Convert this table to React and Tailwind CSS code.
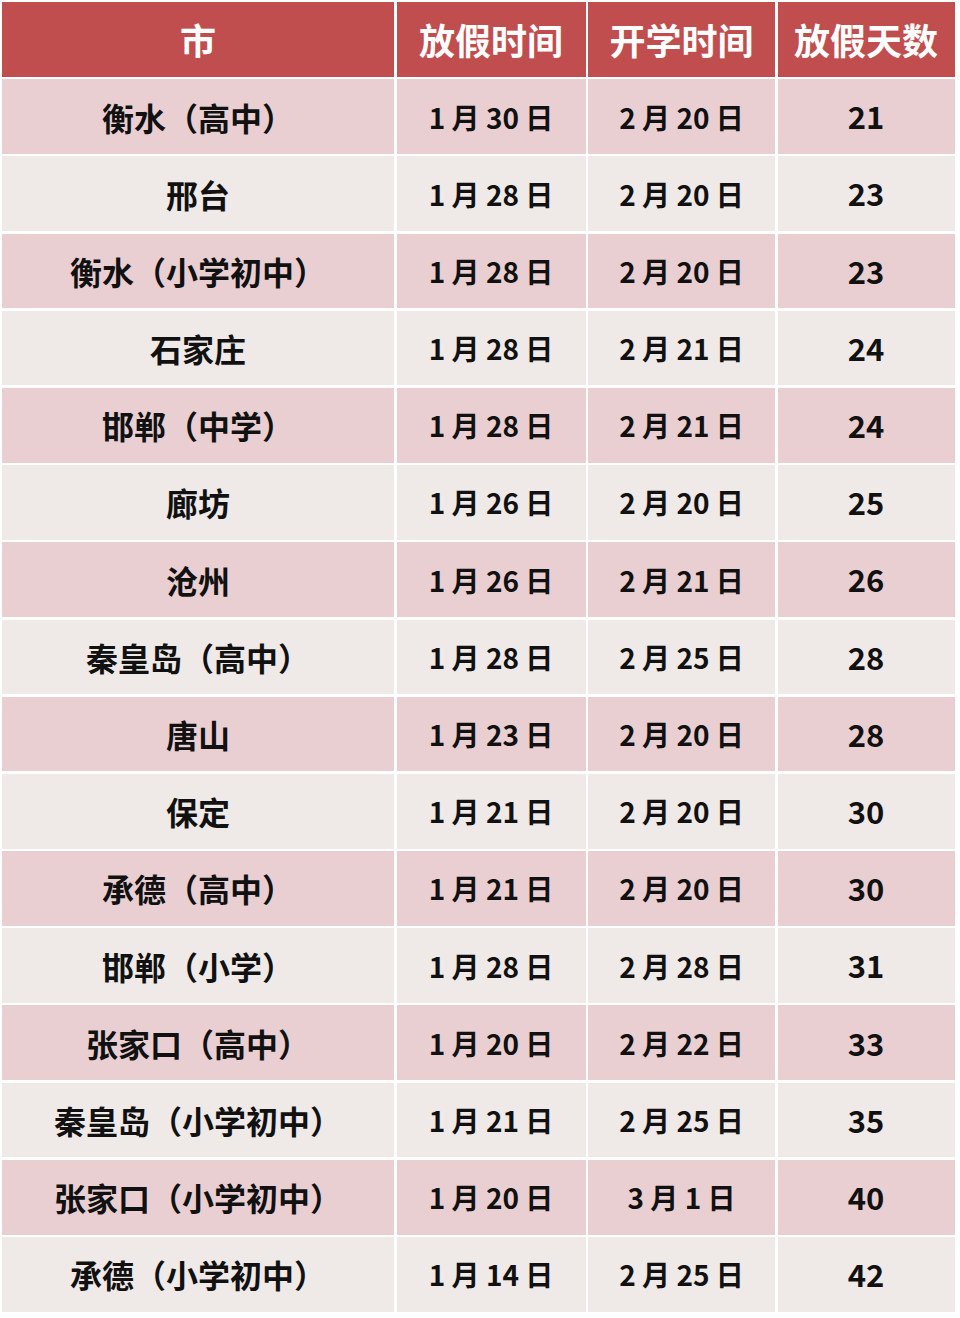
const rows = [
  ["衡水（高中）", "1 月 30 日", "2 月 20 日", "21"],
  ["邢台", "1 月 28 日", "2 月 20 日", "23"],
  ["衡水（小学初中）", "1 月 28 日", "2 月 20 日", "23"],
  ["石家庄", "1 月 28 日", "2 月 21 日", "24"],
  ["邯郸（中学）", "1 月 28 日", "2 月 21 日", "24"],
  ["廊坊", "1 月 26 日", "2 月 20 日", "25"],
  ["沧州", "1 月 26 日", "2 月 21 日", "26"],
  ["秦皇岛（高中）", "1 月 28 日", "2 月 25 日", "28"],
  ["唐山", "1 月 23 日", "2 月 20 日", "28"],
  ["保定", "1 月 21 日", "2 月 20 日", "30"],
  ["承德（高中）", "1 月 21 日", "2 月 20 日", "30"],
  ["邯郸（小学）", "1 月 28 日", "2 月 28 日", "31"],
  ["张家口（高中）", "1 月 20 日", "2 月 22 日", "33"],
  ["秦皇岛（小学初中）", "1 月 21 日", "2 月 25 日", "35"],
  ["张家口（小学初中）", "1 月 20 日", "3 月 1 日", "40"],
  ["承德（小学初中）", "1 月 14 日", "2 月 25 日", "42"],
];

const headers = ["市", "放假时间", "开学时间", "放假天数"];

export default function App() {
  return (
    <div
      className="w-[960px] h-[1318px] bg-white pt-[2px] pl-[2px] overflow-hidden"
      style={{ fontFamily: '"Noto Sans CJK SC", "Noto Sans", sans-serif' }}
    >
      <div className="grid grid-cols-[392px_189px_187px_177px] gap-x-[2.5px] gap-y-[2.5px] auto-rows-[74.7px]">
        {headers.map((h) => (
          <div
            key={h}
            className="bg-[#c14e4e] text-white font-bold text-[36px] flex items-center justify-center"
          >
            {h}
          </div>
        ))}
        {rows.map((r, i) => {
          const bg = i % 2 === 0 ? "bg-[#e9cfd2]" : "bg-[#efe9e8]";
          return [
            <div key={i + "a"} className={`${bg} flex items-center justify-center font-bold text-[32px] text-[#111]`}>
              {r[0]}
            </div>,
            <div key={i + "b"} className={`${bg} flex items-center justify-center font-bold text-[28px] text-[#111]`}>
              {r[1]}
            </div>,
            <div key={i + "c"} className={`${bg} flex items-center justify-center font-bold text-[28px] text-[#111]`}>
              {r[2]}
            </div>,
            <div key={i + "d"} className={`${bg} flex items-center justify-center font-bold text-[31px] text-[#111]`}>
              {r[3]}
            </div>,
          ];
        })}
      </div>
    </div>
  );
}
